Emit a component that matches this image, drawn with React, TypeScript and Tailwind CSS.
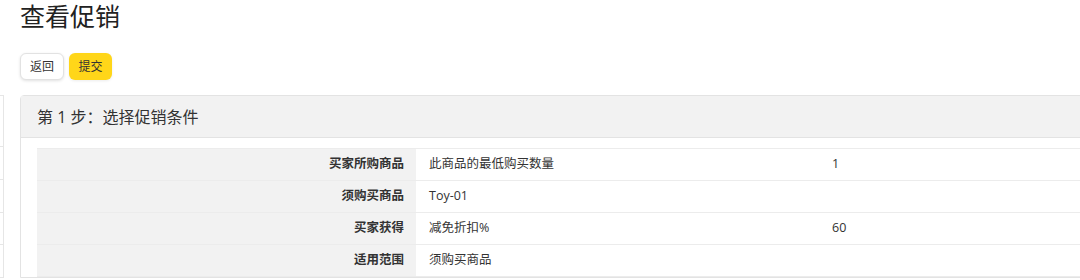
const rows = [
  { label: '买家所购商品', value: '此商品的最低购买数量', extra: '1' },
  { label: '须购买商品', value: 'Toy-01', extra: '' },
  { label: '买家获得', value: '减免折扣%', extra: '60' },
  { label: '适用范围', value: '须购买商品', extra: '' },
];

export default function App() {
  return (
    <div
      className="relative h-[280px] w-[1080px] overflow-hidden bg-white text-[#333]"
      style={{ fontFamily: '"Open Sans", "Noto Sans CJK SC", sans-serif' }}
    >
      {/* sidebar edge */}
      <div className="absolute left-0 top-[95px] w-[4px] border-r border-[#e6e6e6]">
        <div className="h-[52px] border-t border-b border-[#e6e6e6]" />
        <div className="h-[33px] border-b border-[#e6e6e6]" />
        <div className="h-[33px] border-b border-[#e6e6e6]" />
        <div className="h-[32px] border-b border-[#e6e6e6]" />
        <div className="h-[33px] border-b border-[#e6e6e6]" />
      </div>

      <div className="pl-[20px]">
        <h1 className="h-[32px] text-[25px] leading-[32px] font-normal text-[#222]">查看促销</h1>

        <div className="mt-[21px] flex gap-[5px]">
          <button className="h-[27px] w-[44px] rounded-[6px] border border-[#e2e2e2] bg-white text-[12px] text-[#333] shadow-[0_1px_3px_rgba(0,0,0,0.12)]">
            返回
          </button>
          <button className="h-[27px] w-[43px] rounded-[6px] bg-[#ffd619] text-[12px] text-[#333] shadow-[0_1px_3px_rgba(0,0,0,0.08)]">
            提交
          </button>
        </div>

        <div className="mt-[15px] w-[1100px] rounded-tl-[4px] border border-[#e3e3e3]">
          <div className="flex h-[42px] items-center border-b border-[#e3e3e3] bg-[#f2f2f2] pl-[16px] text-[16px] text-[#333]">
            第 1 步：选择促销条件
          </div>
          <div className="bg-white pt-[10px] pl-[16px]">
            <div className="border-t border-[#ececec]">
              {rows.map((r) => (
                <div key={r.label} className="flex h-[32px] border-b border-[#ececec] text-[12.5px]">
                  <div className="flex w-[379px] items-center justify-end bg-[#f2f2f2] pr-[12px] font-bold text-[#333]">
                    {r.label}
                  </div>
                  <div className="flex w-[404px] items-center pl-[13px] text-[#333]">{r.value}</div>
                  <div className="flex flex-1 items-center pl-[12px] text-[#333]">{r.extra}</div>
                </div>
              ))}
            </div>
          </div>
        </div>
      </div>
    </div>
  );
}
